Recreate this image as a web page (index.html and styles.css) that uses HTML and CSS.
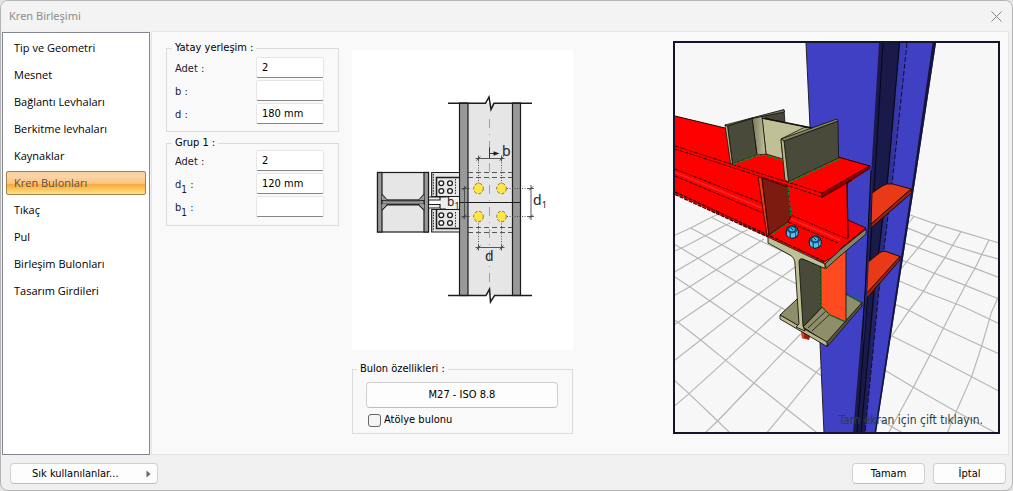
FILE: index.html
```html
<!DOCTYPE html>
<html lang="tr">
<head>
<meta charset="utf-8">
<title>Kren Birleşimi</title>
<link rel="stylesheet" href="styles.css">
</head>
<body>
<main class="dialog">
  <header class="titlebar">
    <h1 class="title">Kren Birleşimi</h1>
    <button class="close" type="button" aria-label="Kapat">
      <svg width="11" height="11" viewBox="0 0 11 11"><path d="M.5 .5l10 10M10.5 .5l-10 10" stroke="#858585" fill="none"/></svg>
    </button>
  </header>
  <div class="body">
    <nav class="nav">
      <button class="nav-item" type="button">Tip ve Geometri</button>
      <button class="nav-item" type="button">Mesnet</button>
      <button class="nav-item" type="button">Bağlantı Levhaları</button>
      <button class="nav-item" type="button">Berkitme levhaları</button>
      <button class="nav-item" type="button">Kaynaklar</button>
      <button class="nav-item selected" type="button" aria-current="page">Kren Bulonları</button>
      <button class="nav-item" type="button">Tıkaç</button>
      <button class="nav-item" type="button">Pul</button>
      <button class="nav-item" type="button">Birleşim Bulonları</button>
      <button class="nav-item" type="button">Tasarım Girdileri</button>
    </nav>
    <section class="content">
      <div class="forms">
        <fieldset class="group">
          <legend>Yatay yerleşim :</legend>
          <div class="rows rows-first">
            <label for="h-count">Adet :</label><input id="h-count" type="text" value="2">
            <label for="h-b">b :</label><input id="h-b" type="text" value="">
            <label for="h-d">d :</label><input id="h-d" type="text" value="180 mm">
          </div>
        </fieldset>
        <fieldset class="group group-last">
          <legend>Grup 1 :</legend>
          <div class="rows">
            <label for="g-count">Adet :</label><input id="g-count" type="text" value="2">
            <label for="g-d">d<sub>1</sub> :</label><input id="g-d" type="text" value="120 mm">
            <label for="g-b">b<sub>1</sub> :</label><input id="g-b" type="text" value="">
          </div>
        </fieldset>
      </div>
      <div class="middle">
        <svg class="diagram" viewBox="352 50 221 300" role="img" aria-label="Bulon yerleşimi">
          <g stroke="#1c1c1c" stroke-width="1.2">
            <rect x="468" y="103" width="44" height="192" fill="#e6e6e6" stroke="none"/>
            <rect x="459.500" y="103" width="8.500" height="192.500" fill="#999"/>
            <rect x="512.500" y="103" width="8" height="192.500" fill="#999"/>
            <path d="M459 202.500H521" />
            <path d="M448 103.300H485.500L489 97L491 109.500L494 103.300H532M448 295.500H486L489.500 289L490.500 302L494.500 295.500H532" fill="none" stroke-width="1.500"/>
            <rect x="377.500" y="172.500" width="51" height="59.500" fill="#e6e6e6"/>
            <rect x="377.500" y="172.500" width="4.500" height="59.500" fill="#999"/>
            <rect x="424" y="172.500" width="4.500" height="59.500" fill="#999"/>
            <rect x="382" y="200.300" width="42" height="4" fill="#999"/>
            <path d="M382 194.500L387 200H419L424 194.500M382 210L387 205H419L424 210" fill="none"/>
            <path d="M382 195v5h5zM424 195v5h-5zM382 209v-5h5zM424 209v-5h-5z" fill="#999" stroke="none"/>
            <path d="M386 201H420" stroke="#555"/>
            <path d="M459 172.500H431.700V196.500H459M459 232H431.700V209.500H459" fill="#e6e6e6"/>
            <path d="M429 197H440V200H429M429 204.500H440V208H429M440 197H448V209H440" fill="#eee"/>
            <path d="M459 177.500H436.500V196M459 228.500H436.500V210" fill="none" stroke-width="1.500"/>
            <g fill="#fff" stroke-width="1.300">
              <circle cx="441.300" cy="183.300" r="2.400"/><circle cx="450" cy="183.300" r="2.400"/>
              <circle cx="441.300" cy="191" r="2.400"/><circle cx="450" cy="191" r="2.400"/>
              <circle cx="441.300" cy="215.300" r="2.400"/><circle cx="450" cy="215.300" r="2.400"/>
              <circle cx="441.300" cy="223" r="2.400"/><circle cx="450" cy="223" r="2.400"/>
            </g>
            <path d="M455.500 179V195M455.500 212V227M433.500 174V195M433.500 212V231" stroke-width=".9" stroke-dasharray="1.500 1.200"/>
          </g>
          <rect x="446" y="197.500" width="13" height="11.500" fill="#eee"/>
          <g stroke="#444" fill="none" stroke-width=".9">
            <path d="M468 172.500H512M468 177.500H512M468 227.500H512M468 232.500H512" stroke-dasharray="5 3"/>
            <path d="M489.500 119V285" stroke="#999" stroke-dasharray="9 6 1 6"/>
            <path d="M478.500 160V184M501.500 160V184M478.500 221V246M501.500 221V246M507 188.500H530M507 216.500H530" stroke-dasharray="1 1.500"/>
            <path d="M475.500 158.500H504.500M475.500 247.500H504.500M531 185V220M464.500 186V219M478.500 155.500v6M501.500 155.500v6M478.500 244.500v6M501.500 244.500v6M528 188.500h6M528 216.500h6M461.500 188.500h8M461.500 216.500h8"/>
            <path d="M476.500 160.500l4-4M499.500 160.500l4-4M476.500 249.500l4-4M499.500 249.500l4-4M529 190.500l4-4M529 218.500l4-4M462.500 190.500l4-4M462.500 218.500l4-4"/>
            <path d="M489.500 147.500V158M490 153.500H495" stroke="#222"/>
          </g>
          <path d="M493.500 151.200L499.500 153.500L493.500 155.800z" fill="#222"/>
          <g fill="#ffe545" stroke="#776c2c" stroke-width=".9" stroke-dasharray="3 1.800">
            <ellipse cx="478.500" cy="188.500" rx="4.800" ry="5.300"/><ellipse cx="501.500" cy="188.500" rx="4.800" ry="5.300"/>
            <ellipse cx="478.500" cy="216.500" rx="4.800" ry="5.300"/><ellipse cx="501.500" cy="216.500" rx="4.800" ry="5.300"/>
          </g>
          <g class="dim-text">
            <text x="502" y="156">b</text>
            <text x="485" y="261">d</text>
            <text x="533" y="205">d<tspan class="dim-sub" dy="3">1</tspan></text>
            <text class="dim-small" x="447" y="206">b<tspan class="dim-sub" dy="3">1</tspan></text>
          </g>
        </svg>
        <fieldset class="group bolt-group">
          <legend>Bulon özellikleri :</legend>
          <button class="btn bolt-btn" type="button">M27 - ISO 8.8</button>
          <label class="check"><input type="checkbox">Atölye bulonu</label>
        </fieldset>
      </div>
      <div class="viewer">
        <svg class="scene" viewBox="675 43 323 389" role="img" aria-label="3B görünüm">
          <defs>
            <linearGradient id="webFade" x1="0" x2="1"><stop offset="0" stop-color="#19194a"/><stop offset="1" stop-color="#4040c4"/></linearGradient>
            <linearGradient id="fillet" x1="0" x2="1"><stop offset="0" stop-color="#77775f"/><stop offset="1" stop-color="#c4c49a"/></linearGradient>
            <g id="bolt">
              <path d="M-6 0L-5-4L0-6.500L5-4.500L6.500 0L5 5L0 6.500L-5 4z" fill="#1d5c80" stroke="#0c2530" stroke-width="1"/>
              <path d="M-5-1L-2.500 1V5.500L-5 3zM-1 1.500L3 1V5L-1 5.800zM4 .5L5.500-1.500V2.500L4 4z" fill="#52c4f0"/>
              <path d="M-3.500-3.500L0-5.500L3.500-4L3-1L0 0L-3-1z" fill="#45b4e6" stroke="#10303f" stroke-width=".8"/>
              <path d="M-1-4l2 2" stroke="#10303f"/>
            </g>
          </defs>
          <rect x="674" y="42" width="326" height="392" fill="#f7f7f7"/>
          <g transform="translate(674 194) scale(.33333)" fill="none" stroke="#b4b7b4" stroke-width="3.500">
            <path d="M112 70L157 92L204 115L368 192M50 102L94 125L143 152L197 182L257 213L368 270M0 150L22 163L72 193L127 227L187 263L253 301L340 352M0 247L47 278L107 320L173 365L245 415L330 472L445 547M0 377L12 385L80 438L155 499L240 567L338 645L430 717M0 558L45 599L131 681L168 717"/>
            <path d="M0 125L50 102L112 70L130 62M0 172L22 163L94 125L157 92L170 86M0 235L72 193L143 152L204 115L222 107M0 305L47 278L127 227L197 182L270 135M0 392L12 385L107 320L187 263L257 213L340 160M0 500L80 438L173 365L253 301L370 214M0 637L45 599L155 499L245 415L325 340M93 717L131 681L240 567L330 472L380 420M278 717L338 645L425 537L442 518"/>
          </g>
          <g transform="translate(840 160) scale(.33333)" fill="none" stroke="#b4b7b4" stroke-width="3.500">
            <path d="M210 165L290 193L363 215L447 240L480 250M200 203L265 229L343 258L427 284L480 298M190 248L235 263L315 293L405 325L480 354M185 300L283 340L376 376L480 418M178 363L250 394L370 440L480 492M165 433L205 450L310 505L425 558L480 583M150 525L270 585L395 650L480 695M130 628L220 682L340 750L480 826M120 780L190 820"/>
            <path d="M222 170L195 200M290 193L235 263L180 330M363 215L315 293L283 340L250 394L205 455L140 550M447 240L405 325L376 376L310 505L270 585L220 682L145 820M480 400L455 455L425 558L395 650L335 785L322 820"/>
          </g>

          <path d="M806 43H936L916 175L898 290L876 433H824L820 343L810 127z" fill="#4040c4"/>
          <path d="M806 43L810 127L820 343L824 433" fill="none" stroke="#222" stroke-width="1"/>
          <path d="M932.500 43H936L916 175L898 290L876 433H874.500L896 290L914 172z" fill="#15153a"/>
          <path d="M899 43H907L893 175L879 290L865 433H861L874 290L888 175z" fill="url(#webFade)"/>
          <path d="M879 43H900L888.500 175L875 290L861 433H853L865 290L871 175z" fill="#19194a"/>
          <path d="M883 43L875 175L868 290L857 433M899.500 43L888 175L874 290L861 433" fill="none" stroke="#070718" stroke-width="1"/>
          <path d="M907 43L893 175L879 290L865 433" fill="none" stroke="#0b0b35" stroke-width="1" stroke-dasharray="5 2"/>

          <g stroke="#1b0b05" stroke-width="1">
            <path d="M911 189L911.500 193L871 228V223z" fill="#9c2010"/>
            <path d="M872 193L883 185.500Q887 183 893 184L911 189L871 224z" fill="#e83a18"/>
            <path d="M900 256V260L866 299V293z" fill="#9c2010"/>
            <path d="M867 263L880 252.500Q883 250.500 886 251.500L900 256.500L866 294z" fill="#e83a18"/>
          </g>
          <path d="M871 170L865 290L862 340H864L867.500 290L873 170z" fill="#222266"/>
          <path d="M871 170L865 293L862 340" fill="none" stroke="#050516"/>

          <path d="M675 116L725 128L812 150L840 157L870 166V168L848 184V220L866 229L840 250L826 264L768 237L675 194z" fill="#f00"/>
          <path d="M675 116L725 128M838 157L870 166" stroke="#200" fill="none"/>
          <path d="M822 193L870 165.500V168.500L840 187L822 197.500z" fill="#8a0000" stroke="#300" stroke-width=".8"/>
          <path d="M675 172.500L762 208M791 219L840 240" stroke="#ff1c1c" stroke-width="2" fill="none"/>
          <path d="M675 146L765 175L822 193M675 149L765 178L822 197M675 169L762 203M675 176L763 213M791 215L840 236L848 239M788 222L838 243" fill="none" stroke="#4d0000" stroke-width="1" stroke-dasharray="4 1"/>
          <path d="M675 192L768 235L825 262M675 194.500L768 237" fill="none" stroke="#300" stroke-width="1.300" stroke-dasharray="4 1"/>
          <path d="M848 238L847 184Q848 181 852 180" fill="none" stroke="#200" stroke-width="1.300"/>
          <path d="M848 220L866 228L840 249" fill="none" stroke="#400" stroke-width="1"/>
          <path d="M758 177L762 178L769 235L767 236z" fill="#e63a18" stroke="#300" stroke-width=".8"/>
          <path d="M762 178L788 187L791 216L788 222L769 235z" fill="#7c1c10" stroke="#200" stroke-width=".8"/>
          <path d="M788 187L791 216M788 223L771 235" stroke="#08843a" stroke-width="1.300" fill="none" stroke-dasharray="4 1"/>

          <g stroke="#111108" stroke-width=".8">
            <path d="M762 116L784 110L785 123L780 124z" fill="#45453a"/>
            <path d="M762 118L812 128L781 140L783 159L766 154z" fill="#c0c096"/>
            <path d="M804 127.500L812 128L837 119.500L784 140L781 139z" fill="#a8a882"/>
            <path d="M752 118L762 116L766 154L757 155z" fill="url(#fillet)"/>
            <path d="M727.500 126L752 118L757 155L732.500 164z" fill="#4a4a3a"/>
            <path d="M725 125L727.500 126L732.500 164.500L730.500 163z" fill="#b8b88e"/>
            <path d="M725 125L784 109.500L784.500 112L752 118.500L727.500 126z" fill="#77775e"/>
            <path d="M784 141L838 121L838.500 158L788 182z" fill="#4a4a3a"/>
            <path d="M781 139L837 119L838 121L784 141z" fill="#85856a"/>
            <path d="M781 139L784 141L788.500 182L785 180z" fill="#b8b88e"/>
          </g>
          <path d="M733 164.500L757 155.500H766L783 160M789 182.500L839 159" fill="none" stroke="#088a34" stroke-width="1.500" stroke-dasharray="5 1"/>
          <path d="M762 118L812 128" stroke="#111" stroke-width="1.500"/>
          <use href="#bolt" x="792" y="232"/>
          <use href="#bolt" x="815" y="242"/>

          <path d="M801 330L811 334L809 340L802 338z" fill="#9c2010"/><path d="M801 330l3 1v8l-2-1z" fill="#e63a18"/>
          <g stroke="#15150c" stroke-width=".9">
            <path d="M780 315L797 299L822 307L840 326L862 303L846 294V322L827 343z" fill="#8e8e6a"/>
            <path d="M803 327L822 307L846 294L862 303L827 343z" fill="#8e8e6a"/>
            <path d="M862 302.500V306L827 347V342z" fill="#55553e"/>
            <path d="M780 315L827 342V346.500L780 319z" fill="#b8b88e"/>
            <path d="M797 257L821 266L822 307L803 327z" fill="#4a4a3a"/>
            <path d="M808 328L827 310M812 331L830 314" fill="none" stroke-width=".8"/>
            <path d="M820.500 264L846 249V322L830 315L821 306z" fill="#ff4a20"/>
            <path d="M768 237L825 264V268.500L803 259Q799 258 799 262L803 326L805 331L796 327L799 324L795 264Q795 258 790 255L768 243z" fill="#c0c096"/>
            <path d="M825 264L840 250L866 229V234L840 256L826 268.500z" fill="#85856a"/>
          </g>
          <path d="M821 268V306L830 315L846 322M847 295L862 302" fill="none" stroke="#0a7a35" stroke-width="1.300" stroke-dasharray="3 1"/>
        </svg>
        <p class="hint">Tam ekran için çift tıklayın.</p>
      </div>
    </section>
  </div>
  <footer class="footer">
    <button class="btn favorites" type="button"><span>Sık kullanılanlar...</span>
      <svg width="5" height="8" viewBox="0 0 5 8"><path d="M.5 .5L4.500 4L.5 7.500z" fill="#666"/></svg>
    </button>
    <div class="actions">
      <button class="btn" type="button">Tamam</button>
      <button class="btn" type="button">İptal</button>
    </div>
  </footer>
</main>
</body>
</html>
```
FILE: styles.css
```css
* { box-sizing: border-box; }

body {
  margin: 0;
  background: #e4e4e4;
  color: #000;
  font: 11px/14px "DejaVu Sans Condensed", "Noto Sans", sans-serif;
}

button, input {
  font: inherit;
  color: inherit;
}

.dialog {
  display: flex;
  flex-direction: column;
  min-height: 100vh;
  background: #f0f0f0;
  border: 1px solid #b4b4b4;
  border-radius: 8px;
  overflow: hidden;
}

.titlebar {
  display: flex;
  align-items: center;
  justify-content: space-between;
  height: 30px;
  padding: 0 10px 0 8px;
  background: #f3f3f3;
}

.title {
  margin: 0;
  color: #8c8c8c;
  font: 11px/16px "Noto Sans", sans-serif;
}

.close {
  display: flex;
  padding: 0;
  border: 0;
  background: none;
}

.body {
  flex: 1;
  display: grid;
  grid-template-columns: 148px 1fr;
  gap: 1px;
  padding: 0 3px 0 1px;
}

.nav {
  display: flex;
  flex-direction: column;
  gap: 3px;
  margin-top: 1px;
  padding: 3px;
  background: #fff;
  border: 1px solid #828790;
}

.nav-item {
  height: 24px;
  padding: 0 7px;
  border: 1px solid transparent;
  border-radius: 2px;
  background: none;
  text-align: left;
  font-family: "Open Sans", "Noto Sans", sans-serif;
}

.nav-item.selected {
  color: #5a5048;
  border-color: #a5834f;
  background: linear-gradient(#f8cfa0, #fbd4a5 20%, #fbc583 52%, #f9a83e 56%, #fbc55c 78%, #fde08a);
}

.content {
  display: grid;
  grid-template-columns: 173px 221px 1fr;
  gap: 13px;
  padding: 9px 8px 20px 14px;
  background: #f9f9f9;
  border: 1px solid #e5e5e5;
}

.forms {
  display: flex;
  flex-direction: column;
  gap: 4px;
}

.group {
  min-width: 0;
  margin: 0;
  padding: 0 14px 7px 8px;
  border: 1px solid #dcdcdc;
}

.group-last { padding-bottom: 8px; }

.group legend {
  margin-left: -3px;
  padding: 0 3px;
}

.rows {
  display: grid;
  grid-template-columns: 1fr 68px;
  grid-auto-rows: 21px;
  row-gap: 2px;
  align-items: center;
}

.rows-first { padding-top: 2px; }

.rows label {
  padding-top: 3px;
  color: #1a1a33;
}

.rows sub {
  font-size: 10px;
  line-height: 0;
  vertical-align: -5px;
}

.rows input {
  width: 100%;
  height: 21px;
  padding: 0 5px;
  border: 1px solid #e6e6e6;
  border-bottom-color: #868686;
  border-radius: 2px;
  background: #fff;
}

.middle {
  display: flex;
  flex-direction: column;
  gap: 12px;
  padding-top: 9px;
}

.diagram {
  display: block;
  width: 100%;
  background: #fff;
}

.dim-text {
  fill: #222;
  font: 14px "Noto Sans", sans-serif;
}

.dim-small { font-size: 12px; }

.dim-sub { font-size: 9px; }

.bolt-group {
  padding: 6px 14px 6px 13px;
}

.bolt-group legend { margin-left: -9px; }

.btn {
  height: 21px;
  padding: 0 8px;
  border: 1px solid #d0d0d0;
  border-bottom-color: #bdbdbd;
  border-radius: 4px;
  background: #fdfdfd;
}

.bolt-btn {
  width: 100%;
  height: 26px;
}

.check {
  display: flex;
  align-items: center;
  gap: 3px;
  margin-top: 5px;
  padding-left: 2px;
}

.check input {
  appearance: none;
  width: 13px;
  height: 13px;
  margin: 0;
  border: 1px solid #666;
  border-radius: 3px;
  background: #f5f5f5;
}

.check input:checked { background: #0067c0; }

.viewer {
  position: relative;
  justify-self: end;
  align-self: start;
  width: 327px;
  max-width: 100%;
  border: 2px solid #14142c;
}

.scene {
  display: block;
  width: 100%;
}

.hint {
  position: absolute;
  right: 15px;
  bottom: 4px;
  margin: 0;
  color: #2a3f3f;
  font-size: 12px;
  line-height: 16px;
}

.footer {
  display: flex;
  align-items: center;
  justify-content: space-between;
  height: 35px;
  padding: 2px 6px 0 9px;
}

.favorites {
  display: flex;
  align-items: center;
  justify-content: space-between;
  width: 148px;
  padding: 0 6px 0 21px;
}

.actions {
  display: flex;
  gap: 8px;
}

.actions .btn { width: 73px; }
```
